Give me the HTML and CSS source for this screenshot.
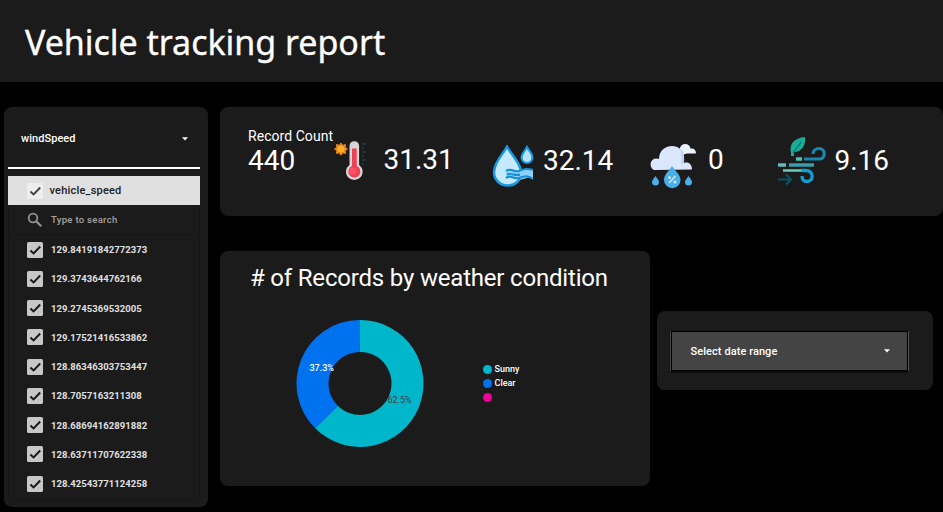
FILE: index.html
```html
<!DOCTYPE html>
<html lang="en">
<head>
<meta charset="utf-8">
<title>Vehicle tracking report</title>
<link rel="stylesheet" href="styles.css">
</head>
<body>
<svg class="defs" width="0" height="0">
  <symbol id="check" viewBox="0 0 16 16"><path d="M3.4 8.5 6.6 11.5 13.2 4.5" fill="none" stroke="currentColor" stroke-width="1.9"/></symbol>
  <symbol id="caret" viewBox="0 0 6 4"><path d="M0 .3h6L3 3.6z" fill="currentColor"/></symbol>
</svg>
<header class="header"><h1 class="title">Vehicle tracking report</h1></header>
<main class="board">
  <aside class="card filters">
    <div class="metric"><span>windSpeed</span><svg class="caret"><use href="#caret"/></svg></div>
    <div class="rule"></div>
    <section class="list">
      <div class="list-head"><span class="box box-light"><svg><use href="#check"/></svg></span>vehicle_speed</div>
      <div class="search"><svg class="lens" viewBox="0 0 16 16"><circle cx="6" cy="6" r="4.3" fill="none" stroke="currentColor" stroke-width="1.8"/><path d="m9.3 9.3 5 5" stroke="currentColor" stroke-width="2.2"/></svg>Type to search</div>
      <ul class="rows">
        <li><span class="box"><svg><use href="#check"/></svg></span>129.84191842772373</li>
        <li><span class="box"><svg><use href="#check"/></svg></span>129.3743644762166</li>
        <li><span class="box"><svg><use href="#check"/></svg></span>129.2745369532005</li>
        <li><span class="box"><svg><use href="#check"/></svg></span>129.17521416533862</li>
        <li><span class="box"><svg><use href="#check"/></svg></span>128.86346303753447</li>
        <li><span class="box"><svg><use href="#check"/></svg></span>128.7057163211308</li>
        <li><span class="box"><svg><use href="#check"/></svg></span>128.68694162891882</li>
        <li><span class="box"><svg><use href="#check"/></svg></span>128.63711707622338</li>
        <li><span class="box"><svg><use href="#check"/></svg></span>128.42543771124258</li>
      </ul>
    </section>
  </aside>
  <div class="content">
    <section class="card kpis">
      <div class="kpi count"><span class="kpi-label">Record Count</span><span class="value">440</span></div>
      <div class="kpi temp">
        <svg width="34" height="42" viewBox="0 0 34 42">
          <path d="m7 3 1.6 2.4 2.9-.8-.4 2.9L13.5 9l-2.4 1.6.5 2.9-3-.7L7 15.200l-1.700-2.400-3 .7.600-2.900L.5 9l2.400-1.600-.5-2.900 3 .8z" fill="#e88718" stroke="#e88718"/><circle cx="7" cy="9" r="3.600" fill="#ffac2d"/>
          <path d="M15.500 6a4.800 4.800 0 0 1 9.600 0v19a8.300 8.300 0 1 1-9.600 0z" fill="#d9d3d6"/>
          <path d="M18 8.500h4.700V26a6 6 0 1 1-4.700 0z" fill="#ed4054"/><circle cx="19" cy="31" r="3.500" fill="#ff5262"/>
          <path d="M28 4h4M28 8h2M28 12h4M28 16h2M28 20h4M28 24h2" stroke="#203e48" stroke-width="1.500"/>
        </svg>
        <span class="value">31.31</span>
      </div>
      <div class="kpi humid">
        <svg width="42" height="42" viewBox="0 0 42 42">
          <path d="M15 1.500C12 8 2 17 2 27c0 8 6 13.500 13.500 13.500 6 0 11-3 13-8.500V24C26 15 18 8 15 1.500z" fill="#c5e9ff" stroke="#1599e3" stroke-width="2.500"/>
          <path d="M35 2c-2 4-5.500 6.500-5.500 10.500a5.500 5.500 0 0 0 11 0C40.500 8.500 37 6 35 2z" fill="#b8e2fc" stroke="#1599e3" stroke-width="2"/>
          <path d="M14 26c5-4 8 2 13 0s8-3 14-1v9c-5-4-9 2-14 0s-8-3-13 0z" fill="#8ed2fb"/>
          <path d="M14 26c5-4 8 2 13 0s8-3 14-1M14 33c5-4 8 2 13 0s9-3 14 1M15 29.500c5-2 8 2 13 0" fill="none" stroke="#168fd3" stroke-width="2"/>
        </svg>
        <span class="value">32.14</span>
      </div>
      <div class="kpi rain">
        <svg width="48" height="48" viewBox="0 0 48 48">
          <path d="M32 10c-1-4 1-8 5-8 3 0 5 1.500 5.500 4.500C46 6 48 8 48 11.500h-9L34 13z" fill="#edf2ff"/>
          <path d="M6 28a6 6 0 1 1 5-11C11 9 17 4 24 4c6 0 11 4 12 9v8c4-1.500 8 1 8 6.500z" fill="#dae7ff"/>
          <path d="M32 6c3 3 5 7 4 15l-3 1c1-6 1-10-1-16z" fill="#b9d0f4"/>
          <path d="M24 24c-3 5-8 8.500-8 14a8 8 0 0 0 16.500 0C32.500 32.500 27 29 24 24z" fill="#48aee8"/>
          <path d="M7.500 34c-2 3-3.500 4-3.500 6a3.500 3.500 0 0 0 7 0c0-2-1.500-3-3.500-6zM40.500 34c-2 3-3.500 4-3.500 6a3.500 3.500 0 0 0 7 0c0-2-1.500-3-3.500-6z" fill="#4aaeea"/>
          <path d="m21 41 6.500-7" stroke="#d8eeff" stroke-width="1.300"/><circle cx="21.500" cy="35.500" r="1.500" fill="#c9eaff"/><circle cx="27" cy="40" r="1.500" fill="#c9eaff"/>
        </svg>
        <span class="value">0</span>
      </div>
      <div class="kpi wind">
        <svg width="48" height="48" viewBox="0 0 48 48" fill="none">
          <path d="M13 16C11 7 16 1 27 0c1 8-3 15-11 15v4h-3z" fill="#18ad96"/><path d="m15 16 8-11" stroke="#087d7f" stroke-width="1.500"/>
          <path d="M18 22h6" stroke="#4fc3ba" stroke-width="3.500"/><path d="M26 22h15c7 0 7-10.500 0-10.500-3 0-6 2-6 5.500" stroke="#1687ae" stroke-width="3.200"/>
          <path d="M0 28h8" stroke="#63b8be" stroke-width="3.500"/><path d="M11 28h25" stroke="#3a9dad" stroke-width="3.500"/>
          <path d="M5 33.500h21" stroke="#68ccbf" stroke-width="2.500"/><path d="M23 33.500h5c8 0 8 11 1 11-3 0-5-2-5-5.500" stroke="#159dcb" stroke-width="3.300"/>
          <path d="M0 42.500h12M8 37.500l5 5-5 5" stroke="#085263" stroke-width="2.200"/>
        </svg>
        <span class="value">9.16</span>
      </div>
    </section>
    <div class="lower">
      <section class="card chart">
        <h2 class="chart-title"># of Records by weather condition</h2>
        <div class="chart-body">
          <svg class="donut" width="128" height="128" viewBox="-64 -64.400 128 128">
            <path d="M0-63.500A63.500 63.500 0 1 1-44.900 44.900L-22.270 22.270A31.500 31.500 0 1 0 0-31.500z" fill="#00b6cb"/>
            <path d="M-44.900 44.900A63.500 63.500 0 0 1-.8-63.500V-31.500A31.500 31.500 0 0 0-22.270 22.270z" fill="#0072f0"/>
            <path d="M-.9-63.500H0V-31.500H-.6z" fill="#8a48b8"/>
            <text class="slice-light" x="-50.500" y="-12.400">37.3%</text>
            <text class="slice-dark" x="27.500" y="19.600">62.5%</text>
          </svg>
          <ul class="legend">
            <li><i class="dot sunny"></i>Sunny</li>
            <li><i class="dot clear"></i>Clear</li>
            <li><i class="dot other"></i></li>
          </ul>
        </div>
      </section>
      <section class="card date"><div class="select"><span>Select date range</span><svg class="caret"><use href="#caret"/></svg></div></section>
    </div>
  </div>
</main>
</body>
</html>
```
FILE: styles.css
```css
* { box-sizing: border-box; }
body { margin: 0; width: 943px; height: 512px; overflow: hidden; background: #000; color: #fff; font-family: Roboto, sans-serif; }
h1, h2, ul { margin: 0; padding: 0; font-weight: 400; list-style: none; }
svg { display: block; flex: none; }
.defs { position: absolute; }
.header { height: 82px; background: #1b1b1b; padding: 18px 25px 0; }
.title { font: 34px/48px "Trebuchet MS", "Noto Sans", sans-serif; letter-spacing: -0.03px; -webkit-text-stroke: .35px #fff; white-space: nowrap; }
.board { display: flex; gap: 12px; padding: 25px 0 0 4px; }
.card { background: #1b1b1b; border-radius: 8px; }
.filters { width: 204px; height: 400px; flex: none; padding: 0 8px 0 4px; }
.metric { height: 60px; display: flex; align-items: center; justify-content: space-between; padding: 3px 12px 0 13px; font-size: 11px; font-weight: 500; letter-spacing: .05px; }
.caret { width: 6px; height: 4px; }
.rule { height: 2px; background: #fff; }
.list { margin-top: 7px; height: 324px; border: solid #171717; border-width: 0 1px 1px; }
.list-head { height: 29px; margin: 0 -1px; background: #e0e0e0; color: #212121; display: flex; align-items: center; padding-left: 19px; gap: 6.5px; font-size: 11px; font-weight: 500; letter-spacing: .2px; }
.box { width: 16px; height: 16px; flex: none; background: #c7c7c7; border-radius: 1.5px; color: #171717; }
.box svg { width: 16px; height: 16px; }
.box-light { background: #eee; color: #444; }
.search { height: 30px; display: flex; align-items: center; gap: 8px; padding-left: 18px; color: #a3a3a3; font-size: 9.5px; font-weight: 500; letter-spacing: .3px; border-bottom: 1px solid #181818; }
.lens { width: 16px; height: 16px; color: #929292; }
.rows li { height: 29.25px; display: flex; align-items: center; gap: 8px; padding-left: 18px; font-size: 9.5px; font-weight: 700; letter-spacing: .05px; color: #e0e0e0; }
.content { flex: 1; min-width: 0; }
.kpis { height: 109px; display: flex; align-items: flex-start; padding-left: 28px; }
.kpi { display: flex; flex: none; }
.value { font-size: 28px; line-height: 32px; white-space: nowrap; }
.count { flex-direction: column; width: 86px; padding-top: 21px; }
.count .value { margin-top: 1px; }
.kpi-label { font-size: 14px; line-height: 16px; letter-spacing: .05px; white-space: nowrap; }
.temp { width: 158px; padding-top: 33px; }
.temp .value { margin: 4px 0 0 15.5px; }
.humid { width: 156px; padding-top: 38px; }
.humid .value { margin: 0 0 0 9px; }
.rain { width: 130px; padding-top: 35px; }
.rain .value { margin: 2px 0 0 12px; }
.wind { padding-top: 30px; }
.wind .value { margin: 8px 0 0 8.5px; }
.lower { display: flex; align-items: flex-start; gap: 7px; margin-top: 35px; }
.chart { width: 430px; height: 235px; flex: none; }
.chart-title { font-size: 24px; line-height: 30px; padding: 12px 0 0 30px; letter-spacing: -.19px; white-space: nowrap; }
.chart-body { display: flex; padding: 26px 0 0 76px; }
.donut text { font-size: 9px; }
.slice-light { fill: #fff; font-weight: 500; }
.slice-dark { fill: #424242; }
.legend { margin: 43px 0 0 58.5px; }
.legend li { height: 14px; display: flex; align-items: center; gap: 3px; font-size: 9px; font-weight: 500; }
.dot { width: 9px; height: 9px; border-radius: 50%; }
.sunny { background: #00b6cb; }
.clear { background: #0072f0; }
.other { background: #f10096; }
.date { width: 276px; height: 79px; margin-top: 60px; padding: 20px 0 0 14px; }
.select { width: 237px; height: 40px; background: #444; border: 1px solid #000; box-shadow: 1px 0 #555, -1px 0 #444, 0 1px 2px #000; display: flex; align-items: center; justify-content: space-between; padding: 0 17px 0 18.5px; font-size: 11px; font-weight: 500; letter-spacing: .07px; }
```
